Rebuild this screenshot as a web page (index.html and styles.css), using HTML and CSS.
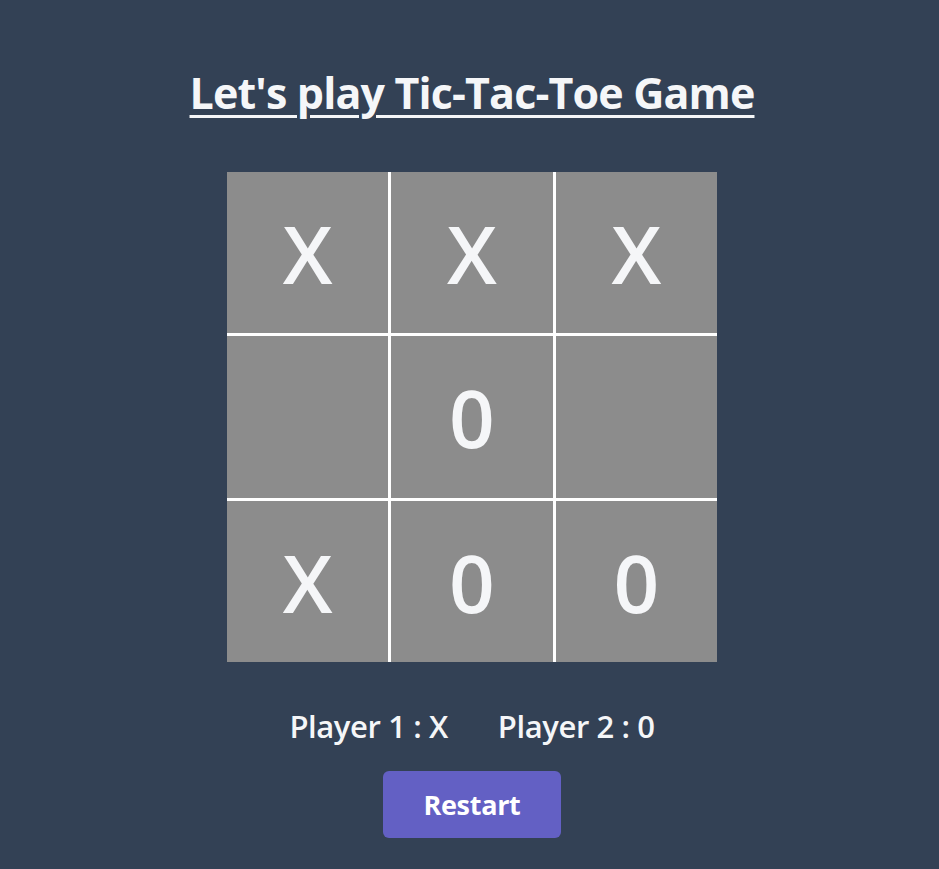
FILE: index.html
```html
<!DOCTYPE html>
<html lang="en">
<head>
<meta charset="utf-8">
<title>Tic-Tac-Toe</title>
<link rel="stylesheet" href="styles.css">
</head>
<body>
<main class="app">
  <h1 class="title">Let's play Tic-Tac-Toe Game</h1>
  <div class="board">
    <div class="cell">X</div>
    <div class="cell">X</div>
    <div class="cell">X</div>
    <div class="cell"></div>
    <div class="cell">0</div>
    <div class="cell"></div>
    <div class="cell">X</div>
    <div class="cell">0</div>
    <div class="cell">0</div>
  </div>
  <div class="players">
    <span class="player">Player 1 : X</span>
    <span class="player">Player 2 : 0</span>
  </div>
  <button class="restart" type="button">Restart</button>
</main>
</body>
</html>
```

FILE: styles.css
```css
html, body {
  margin: 0;
  padding: 0;
}
body {
  background: #334155;
  color: #f5f6f8;
  font-family: "Open Sans", "Noto Sans", sans-serif;
  min-height: 869px;
}
.app {
  display: flex;
  flex-direction: column;
  align-items: center;
  padding-left: 5px;
}
.title {
  margin: 65px 0 0;
  font-size: 43px;
  line-height: 56px;
  font-weight: 700;
  text-decoration: underline;
  text-decoration-thickness: 3px;
  text-underline-offset: 6px;
  letter-spacing: -0.85px;
}
.board {
  margin-top: 51px;
  width: 490px;
  height: 490px;
  display: grid;
  grid-template-columns: repeat(3, 1fr);
  grid-template-rows: repeat(3, 1fr);
  gap: 3px;
  background: #ffffff;
}
.cell {
  background: #8c8c8c;
  display: flex;
  align-items: center;
  justify-content: center;
  font-size: 80px;
  font-weight: 600;
  color: #f5f6f8;
}
.players {
  margin-top: 40px;
  display: flex;
  gap: 50px;
  font-size: 31px;
  font-weight: 600;
  line-height: 48px;
  letter-spacing: -0.4px;
}
.restart {
  margin-top: 21px;
  width: 178px;
  height: 67px;
  border: none;
  border-radius: 6px;
  background: #6360c4;
  color: #ffffff;
  font-family: "Open Sans", "Noto Sans", sans-serif;
  font-size: 27px;
  font-weight: 700;
  letter-spacing: -0.3px;
}
```
